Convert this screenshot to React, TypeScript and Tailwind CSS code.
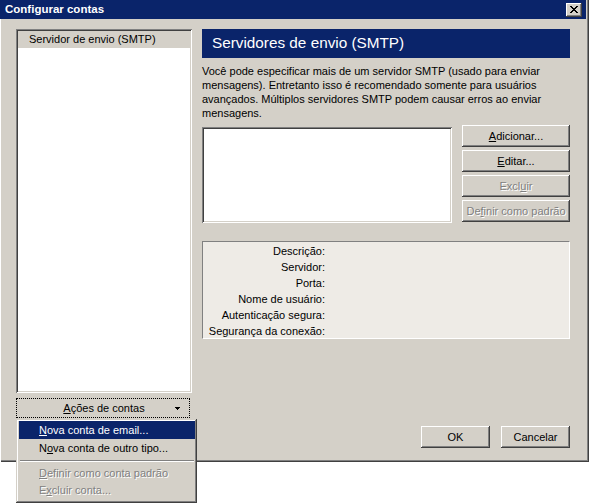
import React from "react";

const raised =
  "shadow-[inset_-1px_-1px_#404040,inset_1px_1px_#ffffff,inset_-2px_-2px_#808080,inset_2px_2px_#d4d0c8]";
const sunken =
  "shadow-[inset_1px_1px_#808080,inset_-1px_-1px_#ffffff,inset_2px_2px_#404040,inset_-2px_-2px_#d4d0c8]";
const disabledText = "text-[#808080] [text-shadow:1px_1px_0_#ffffff]";

function Btn({
  children,
  disabled,
  className = "",
}: {
  children: React.ReactNode;
  disabled?: boolean;
  className?: string;
}) {
  return (
    <div
      className={`h-[22px] flex items-center justify-center bg-[#d4d0c8] ${raised} ${
        disabled ? disabledText : "text-black"
      } ${className}`}
    >
      {children}
    </div>
  );
}

const labels = [
  "Descrição:",
  "Servidor:",
  "Porta:",
  "Nome de usuário:",
  "Autenticação segura:",
  "Segurança da conexão:",
];

export default function App() {
  return (
    <div
      className="relative w-[589px] h-[503px] bg-white overflow-hidden text-[11px] text-black"
      style={{ fontFamily: '"Liberation Sans", Arial, sans-serif' }}
    >
      {/* Window */}
      <div className="h-[462px] bg-[#d4d0c8] flex flex-col shadow-[inset_1px_0_#ffffff,inset_-1px_-1px_#404040,inset_-2px_-2px_#808080]">
        {/* Title bar */}
        <div className="h-[19px] mr-[3px] bg-[#0a246a] flex items-center justify-between pl-[5px] pr-[4px]">
          <span className="text-white font-bold text-[11.5px]">Configurar contas</span>
          <div className={`w-[16px] h-[14px] bg-[#d4d0c8] ${raised} flex items-center justify-center`}>
            <svg width="8" height="7" viewBox="0 0 8 7" shapeRendering="crispEdges">
              <path
                d="M0 0h2v1h-2zM6 0h2v1h-2zM1 1h2v1h-2zM5 1h2v1h-2zM2 2h4v1h-4zM3 3h2v1h-2zM2 4h4v1h-4zM1 5h2v1h-2zM5 5h2v1h-2zM0 6h2v1h-2zM6 6h2v1h-2z"
                fill="#000"
              />
            </svg>
          </div>
        </div>

        {/* Body */}
        <div className="flex flex-1 pt-[10px] pl-[16px] gap-[10px]">
          {/* Left column */}
          <div className="w-[176px] flex flex-col">
            <div className={`h-[364px] bg-white ${sunken} p-[2px]`}>
              <div className="h-[17px] bg-[#d4d0c8] flex items-center pl-[11px]">
                Servidor de envio (SMTP)
              </div>
            </div>
            <div className="mt-[5px] mr-[2px] h-[20px] border border-dotted border-black bg-[#d4d0c8] flex items-center relative">
              <span className="flex-1 text-center pl-[2px]">
                <u>A</u>ções de contas
              </span>
              <svg width="5" height="3" viewBox="0 0 5 3" className="absolute right-[9px] top-[8px]" shapeRendering="crispEdges">
                <path d="M0 0h5v1h-5zM1 1h3v1h-3zM2 2h1v1h-1z" fill="#000" />
              </svg>
            </div>
          </div>

          {/* Right column */}
          <div className="w-[368px] flex flex-col pb-[14px]">
            <div className="h-[29px] bg-[#0a246a] text-white text-[15.3px] flex items-center pl-[10px]">
              Servidores de envio (SMTP)
            </div>
            <p className="mt-[6px] leading-[14px] pr-[20px]">
              Você pode especificar mais de um servidor SMTP (usado para enviar mensagens). Entretanto
              isso é recomendado somente para usuários avançados. Múltiplos servidores SMTP podem causar
              erros ao enviar mensagens.
            </p>
            <div className="mt-[5px] flex items-start gap-[10px]">
              <div className={`mt-[2px] w-[250px] h-[96px] bg-white ${sunken}`} />
              <div className="flex-1 flex flex-col gap-[3px]">
                <Btn>
                  <u>A</u>dicionar...
                </Btn>
                <Btn>
                  <u>E</u>ditar...
                </Btn>
                <Btn disabled>
                  Excl<u>u</u>ir
                </Btn>
                <Btn disabled>
                  De<u>f</u>inir como padrão
                </Btn>
              </div>
            </div>
            <div className="mt-[18px] h-[98px] bg-[#eeebe6] border border-t-[#808080] border-l-[#808080] border-b-white border-r-white pt-px">
              {labels.map((l) => (
                <div key={l} className="h-[16px] flex items-center">
                  <span className="w-[122px] text-right">{l}</span>
                </div>
              ))}
            </div>
            <div className="flex-1" />
            <div className="flex justify-end gap-[11px]">
              <Btn className="w-[69px]">OK</Btn>
              <Btn className="w-[69px]">Cancelar</Btn>
            </div>
          </div>
        </div>
      </div>

      {/* Dropdown menu */}
      <div
        className={`absolute left-[16px] top-[419px] w-[181px] bg-[#d4d0c8] p-[2px] pl-[3px] shadow-[inset_-1px_-1px_#404040,inset_1px_1px_#d4d0c8,inset_-2px_-2px_#808080,inset_2px_2px_#ffffff]`}
      >
        <div className="h-[18px] bg-[#0a246a] text-white flex items-center pl-[20px]">
          <u>N</u>ova conta de email...
        </div>
        <div className="h-[18px] flex items-center pl-[20px]">
          N<u>o</u>va conta de outro tipo...
        </div>
        <div className="h-[8px] flex items-center px-px">
          <div className="w-full h-[2px] border-t border-t-[#808080] border-b border-b-white" />
        </div>
        <div className={`h-[17px] flex items-center pl-[20px] ${disabledText}`}>
          <u>D</u>efinir como conta padrão
        </div>
        <div className={`h-[17px] flex items-center pl-[20px] ${disabledText}`}>
          E<u>x</u>cluir conta...
        </div>
        <div className="h-[2px]" />
      </div>
    </div>
  );
}
